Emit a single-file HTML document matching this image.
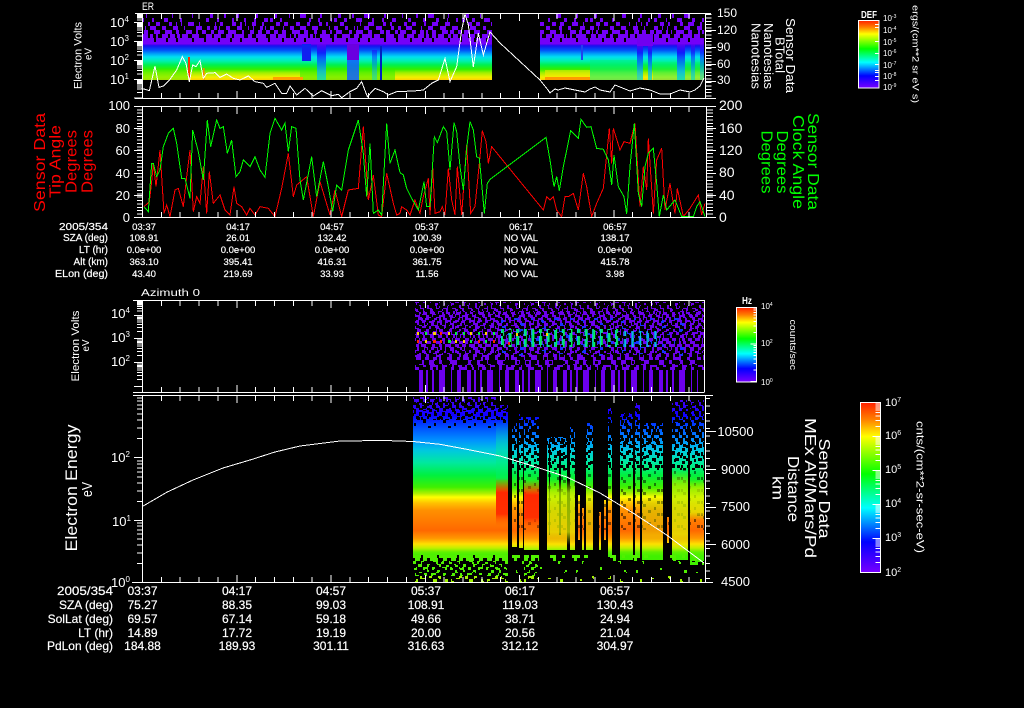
<!DOCTYPE html>
<html><head><meta charset="utf-8"><title>Sensor Data</title>
<style>html,body{margin:0;padding:0;background:#000}svg{display:block}text{font-family:"Liberation Sans",sans-serif;fill:#fff}.r{fill:#f00}.g{fill:#0f0}.s text{stroke:#fff;stroke-width:.2px}</style></head>
<body>
<svg width="1024" height="708" viewBox="0 0 1024 708" xmlns="http://www.w3.org/2000/svg">
<defs>
<linearGradient id="rb" x1="0" y1="0" x2="0" y2="1"><stop offset="0" stop-color="#ff2000"/><stop offset=".1" stop-color="#ff8000"/><stop offset=".2" stop-color="#ffff00"/><stop offset=".42" stop-color="#00ff00"/><stop offset=".62" stop-color="#00ffff"/><stop offset=".82" stop-color="#0000ff"/><stop offset="1" stop-color="#7800ff"/></linearGradient>
<linearGradient id="g1" gradientUnits="userSpaceOnUse" x1="0" y1="44" x2="0" y2="80"><stop offset="0" stop-color="#6a00f0"/><stop offset=".05" stop-color="#1810f0"/><stop offset=".17" stop-color="#0050f8"/><stop offset=".27" stop-color="#00a0f8"/><stop offset=".36" stop-color="#00e0f0"/><stop offset=".47" stop-color="#00f0b0"/><stop offset=".58" stop-color="#00f050"/><stop offset=".7" stop-color="#30f000"/><stop offset=".8" stop-color="#a0f000"/><stop offset=".92" stop-color="#f0f000"/><stop offset="1" stop-color="#ffd000"/></linearGradient>
<linearGradient id="gD" gradientUnits="userSpaceOnUse" x1="0" y1="44" x2="0" y2="80"><stop offset="0" stop-color="#6a00f0"/><stop offset=".25" stop-color="#1000ff"/><stop offset=".5" stop-color="#0060ff"/><stop offset=".75" stop-color="#00b0ff"/><stop offset="1" stop-color="#00e0c0"/></linearGradient>
<linearGradient id="g4" gradientUnits="userSpaceOnUse" x1="0" y1="396" x2="0" y2="556"><stop offset="0" stop-color="#5000f0"/><stop offset=".12" stop-color="#1000ff"/><stop offset=".18" stop-color="#0040ff"/><stop offset=".275" stop-color="#0090ff"/><stop offset=".34" stop-color="#00c8e0"/><stop offset=".415" stop-color="#00e8a0"/><stop offset=".495" stop-color="#00f040"/><stop offset=".57" stop-color="#40f000"/><stop offset=".61" stop-color="#b0f000"/><stop offset=".632" stop-color="#ffff00"/><stop offset=".67" stop-color="#ffc000"/><stop offset=".715" stop-color="#ff9000"/><stop offset=".84" stop-color="#ff6800"/><stop offset=".89" stop-color="#ff9800"/><stop offset=".925" stop-color="#ffe000"/><stop offset=".95" stop-color="#c0f000"/><stop offset=".975" stop-color="#60f000"/><stop offset="1" stop-color="#40f000"/></linearGradient>
<linearGradient id="red" x1="0" y1="0" x2="0" y2="1"><stop offset="0" stop-color="#ff3000" stop-opacity="0"/><stop offset=".3" stop-color="#ff2800"/><stop offset=".75" stop-color="#ff3000"/><stop offset="1" stop-color="#ff6000" stop-opacity="0"/></linearGradient>
<linearGradient id="yg" x1="0" y1="0" x2="0" y2="1"><stop offset="0" stop-color="#a0f000" stop-opacity="0"/><stop offset=".2" stop-color="#b0f000" stop-opacity=".75"/><stop offset=".8" stop-color="#e0f000" stop-opacity=".75"/><stop offset="1" stop-color="#c0f000" stop-opacity="0"/></linearGradient>
<linearGradient id="tl" x1="0" y1="0" x2="0" y2="1"><stop offset="0" stop-color="#00e8a0" stop-opacity="0"/><stop offset=".4" stop-color="#00e8a0" stop-opacity=".45"/><stop offset="1" stop-color="#00f060" stop-opacity=".5"/></linearGradient>
<pattern id="p1" patternUnits="userSpaceOnUse" width="64" height="32" patternTransform="translate(142,14)"><path fill="#7400f8" d="M4 0h3v4h-3zM18 0h2v4h-2zM30 0h6v4h-6zM50 0h2v4h-2zM0 4h3v4h-3zM10 4h3v4h-3zM22 4h6v4h-6zM38 4h3v4h-3zM48 4h2v4h-2zM58 4h4v4h-4zM6 8h4v4h-4zM14 8h4v4h-4zM26 8h4v4h-4zM34 8h6v4h-6zM46 8h6v4h-6zM56 8h2v4h-2zM0 12h4v4h-4zM8 12h6v4h-6zM20 12h4v4h-4zM30 12h6v4h-6zM42 12h6v4h-6zM54 12h6v4h-6zM2 16h6v4h-6zM12 16h6v4h-6zM22 16h8v4h-8zM34 16h4v4h-4zM44 16h6v4h-6zM52 16h4v4h-4zM60 16h4v4h-4zM0 20h6v4h-6zM8 20h8v4h-8zM20 20h6v4h-6zM28 20h10v4h-10zM40 20h6v4h-6zM50 20h10v4h-10zM0 24h12v4h-12zM14 24h10v4h-10zM26 24h8v4h-8zM36 24h14v4h-14zM52 24h10v4h-10zM0 28h64v4h-64z"/></pattern>
<pattern id="h46" patternUnits="userSpaceOnUse" width="46" height="24" patternTransform="translate(142,14)"><path d="M5 0h4v4h-4zM17 0h3v4h-3zM31 0h5v4h-5zM2 4h3v4h-3zM12 4h6v4h-6zM26 4h3v4h-3zM40 4h4v4h-4zM8 8h3v4h-3zM22 8h5v4h-5zM35 8h4v4h-4zM0 12h3v4h-3zM15 12h4v4h-4zM29 12h2v4h-2zM43 12h3v4h-3zM6 16h2v4h-2zM20 16h3v4h-3zM37 16h3v4h-3zM11 20h3v4h-3zM33 20h2v4h-2z"/></pattern>
<pattern id="h23" patternUnits="userSpaceOnUse" width="23" height="13"><path d="M2 0h3v3h-3zM13 0h2v3h-2zM8 3h4v3h-4zM19 3h3v3h-3zM0 6h2v3h-2zM15 6h3v3h-3zM5 9h3v4h-3zM11 10h2v3h-2zM20 10h3v3h-3z"/></pattern>
<pattern id="p3a" patternUnits="userSpaceOnUse" width="40" height="24" patternTransform="translate(415,302)"><path fill="#6c00ec" d="M0 0h4v3h-4zM7 0h4v3h-4zM14 0h2v3h-2zM20 0h5v3h-5zM29 0h2v3h-2zM35 0h4v3h-4zM2 3h4v3h-4zM9 3h5v3h-5zM18 3h4v3h-4zM24 3h4v3h-4zM32 3h5v3h-5zM0 6h3v3h-3zM5 6h4v3h-4zM12 6h6v3h-6zM21 6h3v3h-3zM27 6h6v3h-6zM36 6h4v3h-4zM1 9h5v3h-5zM8 9h4v3h-4zM15 9h5v3h-5zM23 9h6v3h-6zM31 9h4v3h-4zM38 9h2v3h-2zM0 12h5v3h-5zM7 12h7v3h-7zM17 12h4v3h-4zM24 12h6v3h-6zM33 12h5v3h-5zM3 15h5v3h-5zM10 15h6v3h-6zM19 15h7v3h-7zM28 15h4v3h-4zM35 15h5v3h-5zM0 18h4v3h-4zM6 18h5v3h-5zM14 18h6v3h-6zM22 18h5v3h-5zM30 18h6v3h-6zM38 18h2v3h-2zM2 21h5v3h-5zM9 21h4v3h-4zM16 21h7v3h-7zM25 21h6v3h-6zM34 21h5v3h-5z"/></pattern>
<pattern id="p3b" patternUnits="userSpaceOnUse" width="40" height="24" patternTransform="translate(415,302)"><path fill="#1a30ff" d="M7 0h4v3h-4zM24 3h4v3h-4zM12 6h3v3h-3zM31 9h4v3h-4zM0 12h5v3h-5zM19 15h5v3h-5zM35 15h3v3h-3zM6 18h3v3h-3zM25 21h4v3h-4z"/></pattern>
<pattern id="p3c" patternUnits="userSpaceOnUse" width="48" height="15" patternTransform="translate(415,355)"><path fill="#6c00ec" d="M0 0h6v5h-6zM10 0h4v5h-4zM18 0h8v5h-8zM32 0h5v5h-5zM42 0h4v5h-4zM4 5h5v5h-5zM14 5h6v5h-6zM24 5h4v5h-4zM34 5h8v5h-8zM0 10h4v5h-4zM8 10h3v5h-3zM15 10h8v5h-8zM27 10h5v5h-5zM36 10h3v5h-3zM43 10h5v5h-5z"/></pattern>
<pattern id="p3d" patternUnits="userSpaceOnUse" width="48" height="30" patternTransform="translate(419,365)"><path fill="#6c00ec" d="M0 0h4v30h-4zM7 0h2v30h-2zM13 0h2v30h-2zM20 0h6v30h-6zM32 0h1v30h-1zM38 0h4v30h-4z"/></pattern>
<pattern id="hole" patternUnits="userSpaceOnUse" width="16" height="9"><path d="M0 0h4v3h-4zM8 0h3v3h-3zM3 3h4v3h-4zM11 3h3v3h-3zM1 6h2v3h-2zM6 6h5v3h-5zM13 6h3v3h-3z"/></pattern>
<pattern id="hole2" patternUnits="userSpaceOnUse" width="20" height="12"><path d="M3 0h3v3h-3zM14 3h2v3h-2zM8 6h3v3h-3zM1 9h2v3h-2zM17 9h3v3h-3z"/></pattern>
<pattern id="col" patternUnits="userSpaceOnUse" width="7.6" height="30" patternTransform="translate(500,320)"><rect x="1" width="1" height="30" fill="#00d8e8"/><rect x="2" width="2" height="30" fill="#00f060"/></pattern>
<pattern id="col2" patternUnits="userSpaceOnUse" width="7.6" height="30" patternTransform="translate(500,320)"><rect x="2" width="1" height="30" fill="#1080ff"/><rect x="3" width="1.5" height="30" fill="#00d0e0"/></pattern>
<pattern id="pG" patternUnits="userSpaceOnUse" width="36" height="27" patternTransform="translate(413,555)"><path fill="#50f000" d="M0 0h8v3h-8zM10 0h14v3h-14zM26 0h10v3h-10zM2 3h5v3h-5zM10 3h4v3h-4zM17 3h8v3h-8zM30 3h4v3h-4zM0 6h3v3h-3zM8 6h3v3h-3zM20 6h5v3h-5zM28 6h3v3h-3zM5 9h4v3h-4zM14 9h3v3h-3zM24 9h4v3h-4zM33 9h3v3h-3zM1 12h3v3h-3zM10 12h5v3h-5zM19 12h3v3h-3zM29 12h5v3h-5zM6 15h3v3h-3zM14 15h2v3h-2zM23 15h4v3h-4zM2 18h4v3h-4zM11 18h3v3h-3zM18 18h5v3h-5zM30 18h3v3h-3z"/><path fill="#a0f000" d="M7 21h6v3h-6zM16 21h3v3h-3zM25 21h3v3h-3zM2 24h3v3h-3zM20 24h4v3h-4zM32 24h3v3h-3z"/></pattern>
<pattern id="pG2" patternUnits="userSpaceOnUse" width="60" height="27" patternTransform="translate(510,555)"><path fill="#50f000" d="M2 0h8v3h-8zM14 0h4v3h-4zM40 0h6v3h-6zM52 0h3v3h-3zM4 3h3v3h-3zM43 3h3v3h-3zM12 6h2v3h-2zM48 6h3v3h-3zM30 12h2v3h-2zM6 15h2v3h-2zM54 15h3v3h-3z"/><path fill="#a0f000" d="M22 21h2v3h-2zM38 21h3v3h-3zM10 24h2v3h-2zM50 24h3v3h-3z"/></pattern>
<path id="tk" fill="none" stroke="#fff" d="M142.5 0v7m18.85-7v5m18.85-5v5m18.85-5v5m18.85-5v5m18.85-5v7m18.85-7v5m18.85-5v5m18.85-5v5m18.85-5v5m18.85-5v7m18.85-7v5m18.85-5v5m18.85-5v5m18.85-5v5m18.85-5v7m18.85-7v5m18.85-5v5m18.85-5v5m18.85-5v5m18.85-5v7m18.85-7v5m18.85-5v5m18.85-5v5m18.85-5v5m18.85-5v7m18.85-7v5m18.85-5v5m18.85-5v5m18.85-5v5"/>
<path id="dec" fill="none" stroke="#fff" vector-effect="non-scaling-stroke" d="M-8 0H0M-5-30.1H0M-5-47.7H0M-5-60.2H0M-5-69.9H0M-5-77.8H0M-5-84.5H0M-5-90.3H0M-5-95.4H0"/>
<path id="dec2" fill="none" stroke="#fff" vector-effect="non-scaling-stroke" d="M-6 0H0M-3-30.1H0M-3-47.7H0M-3-60.2H0M-3-69.9H0M-3-77.8H0M-3-84.5H0M-3-90.3H0M-3-95.4H0"/>
</defs>
<rect width="1024" height="708" fill="#000"/>

<!-- Panel 1 spectrogram -->
<g shape-rendering="crispEdges">
<rect x="142" y="14" width="350" height="31" fill="url(#p1)"/>
<rect x="540" y="14" width="164" height="31" fill="url(#p1)"/>
<rect x="142" y="14" width="350" height="24" fill="url(#h46)"/>
<rect x="540" y="14" width="164" height="24" fill="url(#h46)"/>
<rect x="142" y="44" width="350" height="36" fill="url(#g1)"/>
<rect x="540" y="44" width="164" height="36" fill="url(#g1)"/>
<rect x="142" y="70" width="46" height="10" fill="#40f000" opacity=".5"/>
<rect x="300" y="68" width="95" height="12" fill="#30f000" opacity=".55"/>
<rect x="273" y="77" width="30" height="3" fill="#ffa000"/>
<rect x="545" y="70" width="45" height="7" fill="#ffe800" opacity=".5"/>
<rect x="545" y="77" width="45" height="3" fill="#ff9c00"/>
<rect x="590" y="60" width="47" height="20" fill="#00f080" opacity=".55"/>
<rect x="653" y="62" width="47" height="18" fill="#00f080" opacity=".4"/>
<rect x="302" y="44" width="9" height="17" fill="#1020f0"/>
<rect x="317" y="44" width="9" height="36" fill="url(#gD)" opacity=".75"/>
<rect x="347" y="44" width="12" height="16" fill="#6a00e0"/>
<rect x="347" y="60" width="12" height="20" fill="#1060ff" opacity=".85"/>
<rect x="372" y="50" width="5" height="30" fill="url(#gD)" opacity=".5"/>
<rect x="380" y="46" width="2" height="34" fill="#0020c0"/>
<rect x="637" y="44" width="6" height="36" fill="url(#gD)" opacity=".75"/>
<rect x="648" y="44" width="4" height="36" fill="url(#gD)" opacity=".75"/>
<rect x="677" y="44" width="8" height="36" fill="url(#gD)" opacity=".8"/>
<rect x="691" y="44" width="4" height="36" fill="url(#gD)" opacity=".6"/>
<rect x="700" y="44" width="4" height="36" fill="url(#gD)" opacity=".6"/>
<rect x="581" y="45" width="2" height="15" fill="#2040f0"/>
<rect x="637" y="34" width="16" height="12" fill="#7000f0"/>
<rect x="188" y="57" width="2" height="21" fill="#ff3000"/>
<rect x="203" y="68" width="1.5" height="12" fill="#ff8000"/>
</g>
<g transform="translate(60,0) scale(.33333)" shape-rendering="crispEdges"><polyline fill="none" stroke="#fff" stroke-width="3" points="245,265 268,272 285,198 297,262 310,258 330,238 350,210 367,170 378,190 388,245 398,195 408,200 420,182 430,235 440,220 465,218 480,232 500,222 520,235 540,240 565,228 585,245 610,250 620,262 645,250 665,280 680,280 690,258 710,285 735,265 760,288 785,272 815,287 835,283 845,293 870,275 890,265 905,245 922,290 945,265 970,275 985,285 1010,275 1060,273 1090,270 1115,250 1135,240 1155,175 1170,245 1190,200 1205,90 1215,42 1225,75 1240,201 1255,99 1270,165 1290,96 1320,129 1440,240 1464,270 1470,279 1485,267 1494,270 1515,264 1545,270 1575,276 1590,267 1605,261 1620,270 1650,276 1665,255 1680,261 1710,273 1740,264 1770,270 1800,282 1830,282 1860,270 1890,276 1905,270 1920,258 1932,234"/></g>

<!-- Panel 2 lines -->
<g shape-rendering="crispEdges">
<g transform="translate(20,100) scale(.33333)"><polyline fill="none" stroke="#f00" stroke-width="3" points="372,320 388,305 395,245 400,190 408,260 420,150 432,340 440,315 450,350 465,270 475,265 490,320 500,230 510,150 520,335 530,290 540,310 550,200 560,340 568,215 580,310 600,285 615,330 630,345 642,260 650,310 665,320 680,345 690,325 705,345 720,320 745,325 765,350 785,265 805,160 820,290 830,255 860,230 880,350 900,245 930,345 945,270 965,350 985,270 1015,265 1030,80 1045,300 1060,225 1075,345 1085,350 1100,220 1120,310 1130,345 1140,340"/></g>
<g transform="translate(400,100) scale(.33333)"><polyline fill="none" stroke="#f00" stroke-width="3" points="0,340 5,320 20,330 30,345 45,300 60,340 70,290 85,235 90,345 98,200 105,340 120,335 127,320 135,345 145,205 155,300 165,345 172,200 185,345 200,135 212,340 225,320 240,170 247,92 258,125 265,190 275,140 430,330 440,290 450,300 460,290 470,330 485,350 495,290 505,290 520,280 535,330 550,220 560,260 575,350 590,310 610,265 628,85 635,190 640,85 660,150 672,125 690,130 705,70 720,320 730,200 740,270 745,115 760,340 770,180 785,145 795,330 810,250 825,340 832,265 850,350 870,325 895,285 905,345 915,310"/></g>
<g transform="translate(20,100) scale(.33333)"><polyline fill="none" stroke="#0f0" stroke-width="3" points="372,320 385,335 395,190 400,190 410,230 420,210 430,140 445,100 460,85 470,130 485,235 495,235 510,295 518,90 535,155 550,240 562,60 572,140 590,60 600,85 610,80 622,160 635,120 648,230 660,215 670,180 690,200 705,170 720,210 735,232 750,100 765,55 785,90 795,70 805,155 815,80 828,85 840,240 850,300 875,170 890,290 910,185 925,260 938,335 950,255 965,270 985,150 1015,60 1030,160 1040,290 1050,130 1060,340 1075,330 1085,345 1100,70 1110,190 1125,150 1140,218"/></g>
<g transform="translate(400,100) scale(.33333)"><polyline fill="none" stroke="#0f0" stroke-width="3" points="0,218 10,225 20,265 35,295 55,330 72,245 80,320 90,320 103,110 112,128 130,80 140,95 150,210 162,68 170,95 180,200 190,270 200,145 210,65 220,90 230,170 238,175 245,250 253,340 262,250 270,238 438,112 450,180 462,260 470,230 478,272 490,200 512,92 535,115 543,58 560,82 573,80 590,145 610,148 625,180 635,255 642,165 655,260 672,290 680,342 690,200 703,70 715,280 725,320 735,200 745,160 760,145 770,250 778,350 790,285 800,330 825,300 845,350 880,350 890,320 900,305 915,350"/></g>
</g>

<!-- Panel 3 spectrogram -->
<g shape-rendering="crispEdges">
<rect x="415" y="302" width="289" height="53" fill="url(#p3a)"/>
<rect x="500" y="318" width="185" height="38" fill="url(#p3b)"/>
<rect x="415" y="355" width="289" height="15" fill="url(#p3c)"/>
<rect x="419" y="370" width="279" height="22" fill="url(#p3d)"/>
<rect x="415" y="302" width="289" height="9" fill="url(#hole)"/>
<rect x="415" y="311" width="289" height="59" fill="url(#h23)"/>
<rect x="500" y="329" width="120" height="18" fill="url(#col)"/>
<rect x="620" y="331" width="40" height="16" fill="url(#col2)"/>
<rect x="500" y="329" width="160" height="18" fill="url(#hole2)"/>
<path fill="#ffd000" d="M417 332h2v3h-2zM433 332h3v3h-3zM448 332h2v3h-2zM470 332h2v3h-2zM485 332h2v3h-2zM425 340h2v3h-2zM455 340h2v3h-2zM463 340h2v3h-2zM516 333h2v3h-2zM546 333h2v3h-2z"/>
<path fill="#ff2000" d="M417 340h2v3h-2zM433 340h3v3h-3zM440 332h2v3h-2zM440 340h2v3h-2zM478 340h2v3h-2zM493 340h2v3h-2zM508 342h2v3h-2z"/>
<path fill="#00f040" d="M425 332h2v3h-2zM448 340h3v3h-3zM455 332h2v3h-2zM463 332h2v3h-2zM478 332h2v3h-2zM470 340h2v3h-2zM485 340h2v3h-2zM493 332h2v3h-2z"/>
</g>

<!-- Panel 4 spectrogram -->
<g shape-rendering="crispEdges" fill="url(#g4)">
<rect x="413" y="397" width="83" height="158"/>
<rect x="496" y="405" width="12" height="153"/>
<rect x="512" y="423" width="5" height="124"/>
<rect x="519" y="413" width="4" height="135"/>
<rect x="524" y="417" width="15" height="133"/>
<rect x="547" y="437" width="20" height="113"/>
<rect x="570" y="427" width="5" height="123"/>
<rect x="578" y="495" width="2" height="45"/>
<rect x="582" y="508" width="2" height="42"/>
<rect x="586" y="423" width="7" height="127"/>
<rect x="599" y="512" width="2" height="38"/>
<rect x="604" y="500" width="2" height="40"/>
<rect x="608" y="407" width="4" height="150"/>
<rect x="620" y="413" width="13" height="147"/>
<rect x="635" y="403" width="5" height="154"/>
<rect x="642" y="423" width="21" height="137"/>
<rect x="667" y="517" width="2" height="26"/>
<rect x="672" y="400" width="16" height="160"/>
<rect x="690" y="400" width="14" height="165"/>
</g>
<g shape-rendering="crispEdges">
<rect x="413" y="396" width="95" height="14" fill="url(#hole)"/>
<rect x="413" y="396" width="95" height="24" fill="url(#h23)"/>
<rect x="413" y="410" width="95" height="18" fill="url(#hole2)"/>
<rect x="512" y="400" width="192" height="45" fill="url(#hole)"/>
<rect x="512" y="400" width="192" height="70" fill="url(#h23)"/>
<rect x="512" y="445" width="192" height="25" fill="url(#hole2)"/>
<rect x="512" y="470" width="192" height="60" fill="url(#hole2)" opacity=".5"/>
<rect x="549" y="440" width="1" height="95" fill="#000"/>
<rect x="559" y="450" width="2" height="85" fill="#000"/>
<rect x="496" y="420" width="12" height="60" fill="url(#tl)"/>
<rect x="496" y="478" width="12" height="48" fill="url(#red)"/>
<rect x="524" y="480" width="15" height="50" fill="url(#red)"/>
<rect x="547" y="480" width="28" height="65" fill="url(#yg)"/>
<rect x="586" y="485" width="7" height="60" fill="url(#yg)" opacity=".6"/>
<rect x="672" y="470" width="16" height="80" fill="url(#yg)"/>
<rect x="690" y="480" width="14" height="40" fill="url(#yg)"/>
<rect x="642" y="495" width="21" height="50" fill="url(#yg)" opacity=".5"/>
<rect x="413" y="555" width="95" height="27" fill="url(#pG)"/>
<rect x="524" y="555" width="15" height="27" fill="url(#pG)"/>
<rect x="510" y="555" width="194" height="27" fill="url(#pG2)"/>
<rect x="413" y="561" width="291" height="21" fill="url(#h23)"/>
</g>
<polyline fill="none" stroke="#fff" shape-rendering="crispEdges" points="142,506.7 166.7,492.3 193,480 223,468 250,460 275,452 300,446 340,441 385,440.5 413,441.5 440,444.3 466.7,449.3 500,456 533,466 566.7,477 600,493 633,513 666.7,535 700,560 704,563"/>

<!-- Axes -->
<g stroke="#fff" fill="none" shape-rendering="crispEdges">
<path d="M135 13.5H711M135 98.5H716M142.5 14V98M705.5 14V98"/>
<path d="M134 106.5H716M134 217.5H716M142.5 106V218M706.5 106V218"/>
<path d="M133 300.5H704.5M133 392.5H704.5M142.5 300V392M704.5 300V392"/>
<path d="M133 395.5H713M132 582.5H713M142.5 396V582M705.5 396V582"/>
<path d="M708.5 14V98" stroke-width="6" stroke-dasharray="1 2.4"/>
<path d="M705 30.5H716M705 47.5H716M705 64.5H716M705 81.5H716"/>
<path d="M139.5 106V218" stroke-width="5" stroke-dasharray="1 2.36"/>
<path d="M134 128.5H142M134 150.5H142M134 173.5H142M134 195.5H142"/>
<path d="M710 106V218" stroke-width="6" stroke-dasharray="1 2.36"/>
<path d="M707 128.5H716M707 150.5H716M707 173.5H716M707 195.5H716"/>
<path d="M707.5 398V582" stroke-width="5" stroke-dasharray="1 6.5"/>
<path d="M705 431.5H716M705 469.5H716M705 507.5H716M705 544.5H716"/>
</g>
<g shape-rendering="crispEdges">
<use href="#tk" transform="translate(0,14)"/><use href="#tk" transform="translate(0,98) scale(1,-1)"/>
<use href="#tk" transform="translate(0,107)"/><use href="#tk" transform="translate(0,217) scale(1,-1)"/>
<use href="#tk" transform="translate(0,301)"/><use href="#tk" transform="translate(0,392) scale(1,-1)"/>
<use href="#tk" transform="translate(0,396)"/><use href="#tk" transform="translate(0,582) scale(1,-1)"/>
<use href="#dec" transform="translate(142,22.5) scale(1,.09)"/><use href="#dec" transform="translate(142,41.5) scale(1,.19)"/><use href="#dec" transform="translate(142,60.5) scale(1,.19)"/><use href="#dec" transform="translate(142,79.5) scale(1,.19)"/>
<use href="#dec" transform="translate(142,98) scale(1,.185)"/>
<use href="#dec" transform="translate(142,315.5) scale(1,.15)"/><use href="#dec" transform="translate(142,338.5) scale(1,.235)"/><use href="#dec" transform="translate(142,362.5) scale(1,.235)"/><use href="#dec" transform="translate(142,386.5) scale(1,.235)"/>
<use href="#dec" transform="translate(142,457.5) scale(1,.623)"/><use href="#dec" transform="translate(142,520.5) scale(1,.623)"/><use href="#dec" transform="translate(142,582.5) scale(1,.623)"/>
</g>

<!-- Colorbars -->
<rect x="858.5" y="20.5" width="20.5" height="67.5" fill="url(#rb)" stroke="#fff"/>
<rect x="736.5" y="307.5" width="20" height="74.5" fill="url(#rb)" stroke="#fff"/>
<rect x="860.5" y="402.5" width="20" height="170" fill="url(#rb)" stroke="#fff"/>
<g shape-rendering="crispEdges">
<use href="#dec" transform="translate(880.5,572.5) scale(1,.34)"/><use href="#dec" transform="translate(880.5,538.5) scale(1,.34)"/><use href="#dec" transform="translate(880.5,504.5) scale(1,.34)"/><use href="#dec" transform="translate(880.5,470.5) scale(1,.34)"/><use href="#dec" transform="translate(880.5,436.5) scale(1,.34)"/>
<use href="#dec2" transform="translate(756.5,381.5) scale(1,.375)"/><use href="#dec2" transform="translate(756.5,344) scale(1,.375)"/>
<path fill="none" stroke="#fff" d="M875 24.5h4M875 27.5h4M875 41.5h4M875 53.5h4M875 64.5h4M875 70.5h4M875 72.5h4M875 76.5h4M875 80.5h4"/>
</g>
<g font-size="8">
<text x="883" y="21">10<tspan font-size="5" dy="-3">-3</tspan></text>
<text x="883" y="33">10<tspan font-size="5" dy="-3">-4</tspan></text>
<text x="883" y="45">10<tspan font-size="5" dy="-3">-5</tspan></text>
<text x="883" y="56">10<tspan font-size="5" dy="-3">-6</tspan></text>
<text x="883" y="68">10<tspan font-size="5" dy="-3">-7</tspan></text>
<text x="883" y="79">10<tspan font-size="5" dy="-3">-8</tspan></text>
<text x="883" y="90">10<tspan font-size="5" dy="-3">-9</tspan></text>
<text x="761" y="309">10<tspan font-size="5" dy="-3">4</tspan></text>
<text x="761" y="346">10<tspan font-size="5" dy="-3">2</tspan></text>
<text x="761" y="385">10<tspan font-size="5" dy="-3">0</tspan></text>
</g>
<g font-size="11">
<text x="885" y="406">10<tspan font-size="7" dy="-4">7</tspan></text>
<text x="885" y="439">10<tspan font-size="7" dy="-4">6</tspan></text>
<text x="885" y="473">10<tspan font-size="7" dy="-4">5</tspan></text>
<text x="885" y="507">10<tspan font-size="7" dy="-4">4</tspan></text>
<text x="885" y="541">10<tspan font-size="7" dy="-4">3</tspan></text>
<text x="885" y="576">10<tspan font-size="7" dy="-4">2</tspan></text>
</g>
<text x="861" y="18" font-size="10" font-weight="bold" textLength="16" lengthAdjust="spacingAndGlyphs">DEF</text>
<text x="742" y="304" font-size="10" font-weight="bold" textLength="10" lengthAdjust="spacingAndGlyphs">Hz</text>
<text transform="translate(912.5,5) rotate(90)" font-size="9" textLength="98" lengthAdjust="spacingAndGlyphs">ergs/(cm**2 sr eV s)</text>
<text transform="translate(790,319.5) rotate(90)" font-size="9" textLength="50.5" lengthAdjust="spacingAndGlyphs">counts/sec</text>
<text transform="translate(916.5,421) rotate(90)" font-size="11" textLength="132" lengthAdjust="spacingAndGlyphs">cnts/(cm**2-sr-sec-eV)</text>

<!-- Titles -->
<text x="142" y="10" font-size="11" textLength="12" lengthAdjust="spacingAndGlyphs">ER</text>
<text x="141" y="296" font-size="10.5" textLength="59" lengthAdjust="spacingAndGlyphs">Azimuth 0</text>

<!-- Left axis labels -->
<g font-size="13">
<text x="110" y="27">10<tspan font-size="8" dy="-5">4</tspan></text>
<text x="110" y="46">10<tspan font-size="8" dy="-5">3</tspan></text>
<text x="110" y="65">10<tspan font-size="8" dy="-5">2</tspan></text>
<text x="110" y="84">10<tspan font-size="8" dy="-5">1</tspan></text>
<text x="111" y="318">10<tspan font-size="8" dy="-5">4</tspan></text>
<text x="111" y="342">10<tspan font-size="8" dy="-5">3</tspan></text>
<text x="111" y="366">10<tspan font-size="8" dy="-5">2</tspan></text>
<text x="111" y="462">10<tspan font-size="8" dy="-5">2</tspan></text>
<text x="112" y="526">10<tspan font-size="8" dy="-5">1</tspan></text>
<text x="111" y="587">10<tspan font-size="8" dy="-5">0</tspan></text>
</g>
<g font-size="13" text-anchor="end">
<text x="130" y="110">100</text><text x="130" y="133">80</text><text x="130" y="155">60</text><text x="130" y="178">40</text><text x="130" y="200">20</text><text x="130" y="222">0</text>
</g>
<g font-size="14">
<text x="719" y="110">200</text><text x="719" y="133">160</text><text x="719" y="155">120</text><text x="719" y="177">80</text><text x="719" y="200">40</text><text x="719" y="222">0</text>
</g>
<g font-size="12">
<text x="717" y="17">150</text><text x="717" y="34">120</text><text x="717" y="51">90</text><text x="717" y="68">60</text><text x="717" y="84">30</text>
</g>
<g font-size="13" text-anchor="middle">
<text x="735.5" y="436">10500</text><text x="735.5" y="474">9000</text><text x="735.5" y="511">7500</text><text x="735.5" y="549">6000</text><text x="735.5" y="586">4500</text>
</g>

<!-- Rotated labels -->
<text transform="translate(81.5,89) rotate(-90)" font-size="11" textLength="67" lengthAdjust="spacingAndGlyphs">Electron Volts</text>
<text transform="translate(91.5,60) rotate(-90)" font-size="10" textLength="12" lengthAdjust="spacingAndGlyphs">eV</text>
<text transform="translate(79,381.5) rotate(-90)" font-size="11" textLength="71" lengthAdjust="spacingAndGlyphs">Electron Volts</text>
<text transform="translate(89,351.5) rotate(-90)" font-size="10" textLength="12" lengthAdjust="spacingAndGlyphs">eV</text>
<text transform="translate(77,551.5) rotate(-90)" font-size="17" textLength="127" lengthAdjust="spacingAndGlyphs">Electron Energy</text>
<text transform="translate(92,497) rotate(-90)" font-size="15" textLength="15" lengthAdjust="spacingAndGlyphs">eV</text>

<text class="r" transform="translate(45,212) rotate(-90)" font-size="16" textLength="99" lengthAdjust="spacingAndGlyphs">Sensor Data</text>
<text class="r" transform="translate(60.5,198) rotate(-90)" font-size="16" textLength="73" lengthAdjust="spacingAndGlyphs">Tip Angle</text>
<text class="r" transform="translate(76.5,193) rotate(-90)" font-size="16" textLength="63" lengthAdjust="spacingAndGlyphs">Degrees</text>
<text class="r" transform="translate(92.5,193) rotate(-90)" font-size="16" textLength="63" lengthAdjust="spacingAndGlyphs">Degrees</text>

<text class="g" transform="translate(808,113) rotate(90)" font-size="16" textLength="97" lengthAdjust="spacingAndGlyphs">Sensor Data</text>
<text class="g" transform="translate(793,115) rotate(90)" font-size="16" textLength="94" lengthAdjust="spacingAndGlyphs">Clock Angle</text>
<text class="g" transform="translate(777,130.5) rotate(90)" font-size="16" textLength="63" lengthAdjust="spacingAndGlyphs">Degrees</text>
<text class="g" transform="translate(761.5,130.5) rotate(90)" font-size="16" textLength="63" lengthAdjust="spacingAndGlyphs">Degrees</text>

<text transform="translate(786,18) rotate(90)" font-size="13" textLength="75" lengthAdjust="spacingAndGlyphs">Sensor Data</text>
<text transform="translate(775.5,37) rotate(90)" font-size="13" textLength="36" lengthAdjust="spacingAndGlyphs">BTotal</text>
<text transform="translate(764,23) rotate(90)" font-size="13" textLength="66" lengthAdjust="spacingAndGlyphs">Nanotesias</text>
<text transform="translate(751.5,23) rotate(90)" font-size="13" textLength="66" lengthAdjust="spacingAndGlyphs">Nanotesias</text>

<text transform="translate(819,438.5) rotate(90)" font-size="16" textLength="100" lengthAdjust="spacingAndGlyphs">Sensor Data</text>
<text transform="translate(805,418) rotate(90)" font-size="16" textLength="140" lengthAdjust="spacingAndGlyphs">MEx Alt/Mars/Pd</text>
<text transform="translate(788,456) rotate(90)" font-size="16" textLength="66" lengthAdjust="spacingAndGlyphs">Distance</text>
<text transform="translate(772.5,476) rotate(90)" font-size="16" textLength="24" lengthAdjust="spacingAndGlyphs">km</text>

<!-- Table 1 -->
<g class="s">
<g font-size="10" text-anchor="end">
<text x="108" y="230" textLength="49" lengthAdjust="spacingAndGlyphs">2005/354</text>
<text x="108" y="241">SZA (deg)</text><text x="108" y="253">LT (hr)</text><text x="108" y="265">Alt (km)</text><text x="108" y="277" textLength="53" lengthAdjust="spacingAndGlyphs">ELon (deg)</text>
</g>
<g font-size="9.5" text-anchor="middle">
<text x="144" y="230">03:37</text><text x="238" y="230">04:17</text><text x="332" y="230">04:57</text><text x="427" y="230">05:37</text><text x="521" y="230">06:17</text><text x="615" y="230">06:57</text>
<text x="144" y="241">108.91</text><text x="238" y="241">26.01</text><text x="332" y="241">132.42</text><text x="427" y="241">100.39</text><text x="521" y="241">NO VAL</text><text x="615" y="241">138.17</text>
<text x="144" y="253">0.0e+00</text><text x="238" y="253">0.0e+00</text><text x="332" y="253">0.0e+00</text><text x="427" y="253">0.0e+00</text><text x="521" y="253">NO VAL</text><text x="615" y="253">0.0e+00</text>
<text x="144" y="265">363.10</text><text x="238" y="265">395.41</text><text x="332" y="265">416.31</text><text x="427" y="265">361.75</text><text x="521" y="265">NO VAL</text><text x="615" y="265">415.78</text>
<text x="144" y="277">43.40</text><text x="238" y="277">219.69</text><text x="332" y="277">33.93</text><text x="427" y="277">11.56</text><text x="521" y="277">NO VAL</text><text x="615" y="277">3.98</text>
</g>

<!-- Table 2 -->
<g font-size="12" text-anchor="end">
<text x="113" y="595" textLength="56" lengthAdjust="spacingAndGlyphs">2005/354</text>
<text x="113" y="609">SZA (deg)</text><text x="113" y="623">SolLat (deg)</text><text x="113" y="637">LT (hr)</text><text x="113" y="650">PdLon (deg)</text>
</g>
<g font-size="12" text-anchor="middle">
<text x="142.5" y="595">03:37</text><text x="237" y="595">04:17</text><text x="331" y="595">04:57</text><text x="426" y="595">05:37</text><text x="520" y="595">06:17</text><text x="615" y="595">06:57</text>
<text x="142.5" y="609">75.27</text><text x="237" y="609">88.35</text><text x="331" y="609">99.03</text><text x="426" y="609">108.91</text><text x="520" y="609">119.03</text><text x="615" y="609">130.43</text>
<text x="142.5" y="623">69.57</text><text x="237" y="623">67.14</text><text x="331" y="623">59.18</text><text x="426" y="623">49.66</text><text x="520" y="623">38.71</text><text x="615" y="623">24.94</text>
<text x="142.5" y="637">14.89</text><text x="237" y="637">17.72</text><text x="331" y="637">19.19</text><text x="426" y="637">20.00</text><text x="520" y="637">20.56</text><text x="615" y="637">21.04</text>
<text x="142.5" y="650">184.88</text><text x="237" y="650">189.93</text><text x="331" y="650">301.11</text><text x="426" y="650">316.63</text><text x="520" y="650">312.12</text><text x="615" y="650">304.97</text>
</g>
</g>
</svg>
</body></html>
